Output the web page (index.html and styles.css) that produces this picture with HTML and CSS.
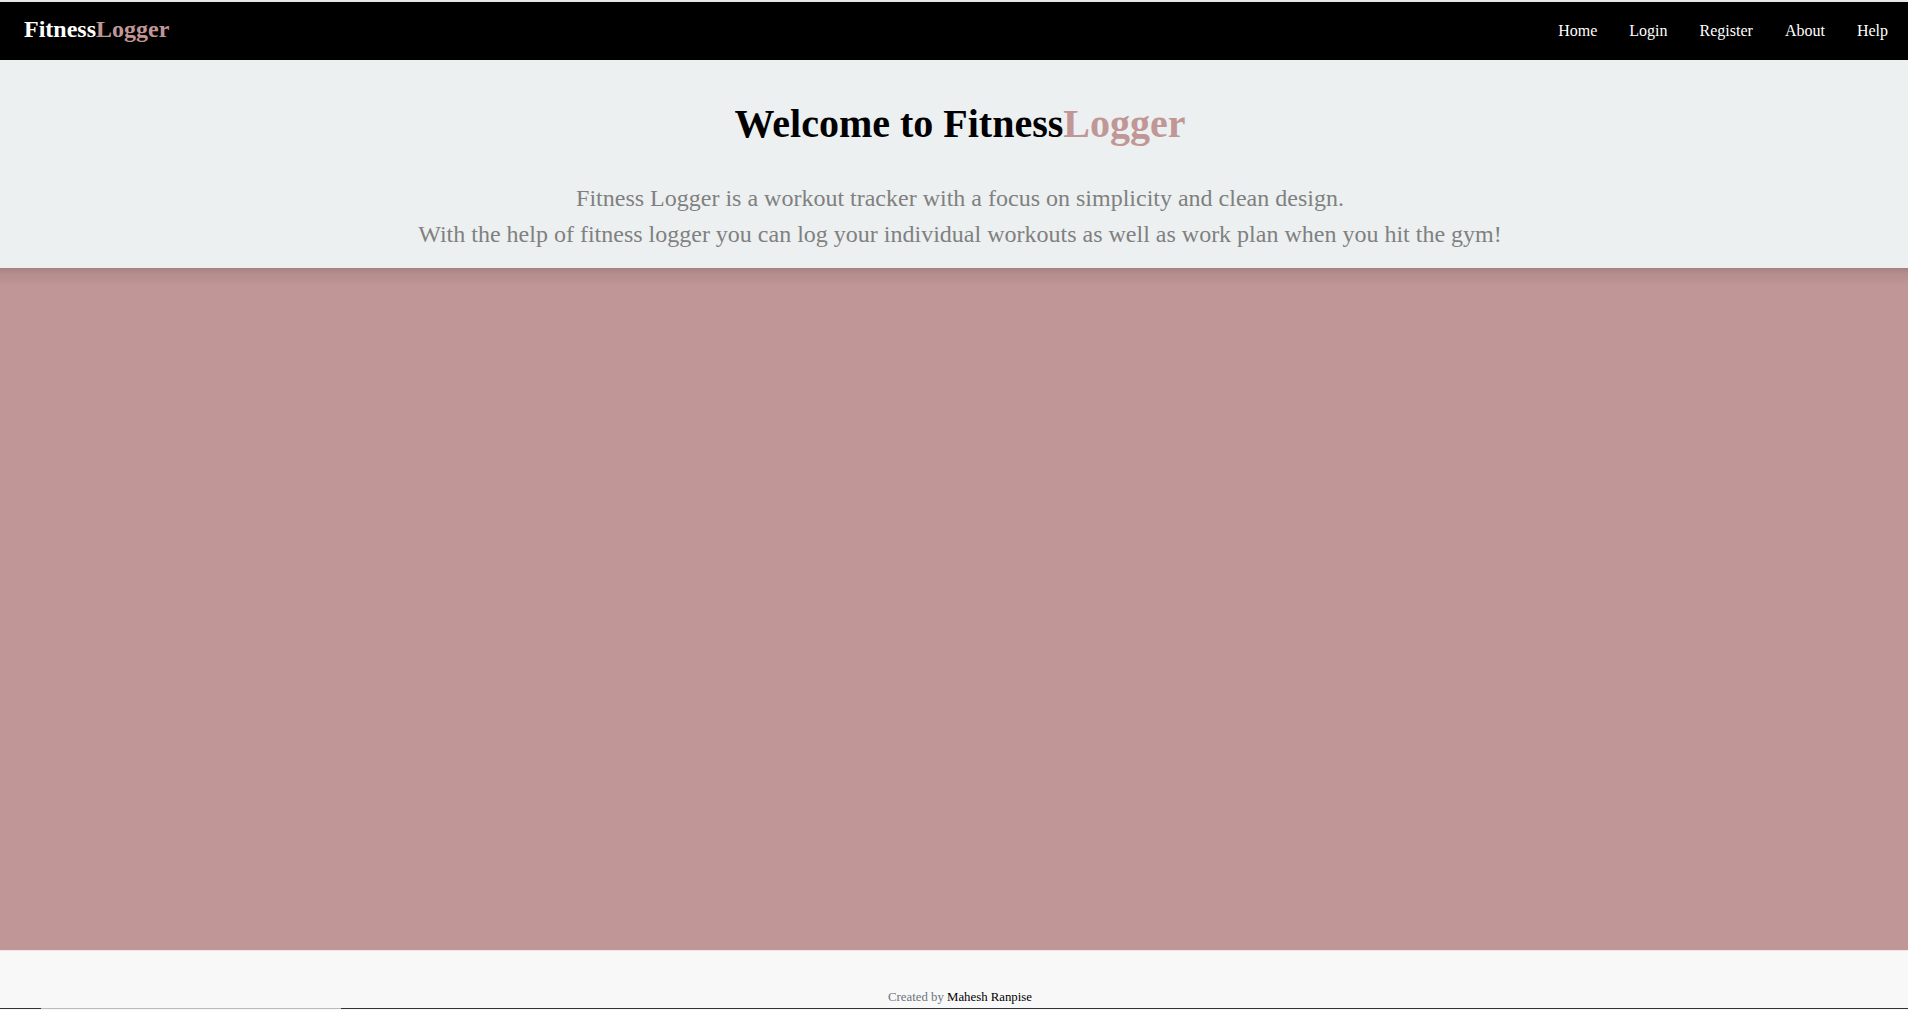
FILE: index.html
```html
<!DOCTYPE html>
<html lang="en">
<head>
<meta charset="utf-8">
<title>FitnessLogger</title>
<link rel="stylesheet" href="styles.css">
</head>
<body>
<nav class="navbar">
  <a class="brand" href="#">Fitness<span class="accent">Logger</span></a>
  <ul class="nav-links">
    <li><a href="#">Home</a></li>
    <li><a href="#">Login</a></li>
    <li><a href="#">Register</a></li>
    <li><a href="#">About</a></li>
    <li><a href="#">Help</a></li>
  </ul>
</nav>
<header class="hero">
  <h1 class="hero-title">Welcome to Fitness<span class="accent">Logger</span></h1>
  <p class="hero-text">Fitness Logger is a workout tracker with a focus on simplicity and clean design.<br>With the help of fitness logger you can log your individual workouts as well as work plan when you hit the gym!</p>
</header>
<main class="showcase"></main>
<footer class="footer">
  <p class="credit">Created by <span class="author">Mahesh Ranpise</span></p>
</footer>
<div class="bottom-line"></div>
</body>
</html>
```
FILE: styles.css
```css
html, body {
  margin: 0;
  padding: 0;
}
body {
  font-family: "Liberation Serif", "Times New Roman", serif;
  background: #f8f8f8;
  overflow: hidden;
}
.accent {
  color: #c09696;
}
.navbar {
  box-sizing: border-box;
  height: 60px;
  border-top: 2px solid #e6e6e6;
  background: #000;
  display: flex;
  align-items: baseline;
  justify-content: space-between;
  padding: 9px 4px 0 24px;
}
.brand {
  font-size: 24px;
  line-height: 36px;
  font-weight: bold;
  color: #fff;
  text-decoration: none;
}
.nav-links {
  list-style: none;
  margin: 0;
  padding: 0;
  display: flex;
  position: relative;
  top: -1px;
}
.nav-links a {
  display: block;
  padding: 0 16px;
  font-size: 16px;
  line-height: 24px;
  color: #fff;
  text-decoration: none;
}
.hero {
  background: #ecf0f1;
  text-align: center;
  padding: 40px 0 0 12px;
  height: 208px;
  box-sizing: border-box;
}
.hero-title {
  margin: 0;
  font-size: 40px;
  line-height: 48px;
  font-weight: bold;
  color: #000;
}
.hero-text {
  margin: 32px 0 0;
  font-size: 24px;
  line-height: 36px;
  color: #808080;
}
.showcase {
  height: 682px;
  background: linear-gradient(to bottom, rgba(0, 0, 0, 0.13) 0, rgba(0, 0, 0, 0.06) 6px, rgba(0, 0, 0, 0) 18px), #c09696;
}
.footer {
  border-top: 1px solid #f4e2e2;
  background: #f8f8f8;
  height: 58px;
  box-sizing: border-box;
  padding: 37px 0 0 12px;
  text-align: center;
}
.credit {
  margin: 0;
  font-size: 12.8px;
  line-height: 19px;
  color: #6c757d;
}
.author {
  color: #000;
}
.bottom-line {
  height: 1px;
  background: linear-gradient(to right, #333 0, #333 41px, #bbb 41px, #bbb 341px, #333 341px);
}
```
